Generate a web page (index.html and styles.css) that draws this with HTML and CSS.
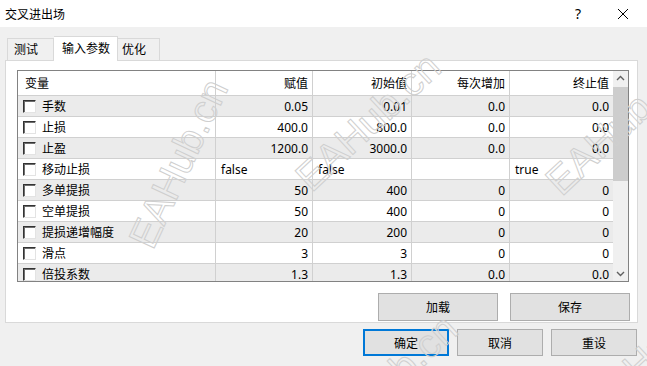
FILE: index.html
```html
<!DOCTYPE html>
<html lang="zh">
<head>
    <meta charset="UTF-8">
    <title>交叉进出场</title>
    <link rel="stylesheet" href="styles.css">
</head>
<body>
    <!-- Barra de título -->
    <div class="titlebar">
        <span class="title">交叉进出场</span>
        <span class="help">?</span>
        <svg class="close" width="12" height="12" viewBox="0 0 12 12"><path d="M1 1L11 11M11 1L1 11" stroke="#000" stroke-width="1"/></svg>
    </div>

    <!-- Pestañas -->
    <div class="tabs">
        <div class="tab t1">测试</div>
        <div class="tab active">输入参数</div>
        <div class="tab t3">优化</div>
    </div>

    <!-- Panel de parámetros -->
    <div class="panel">
        <div class="grid">
            <div class="table">
                <div class="row head">
                    <div class="cell left">变量</div>
                    <div class="cell">赋值</div>
                    <div class="cell">初始值</div>
                    <div class="cell">每次增加</div>
                    <div class="cell">终止值</div>
                </div>
                <div class="row odd">
                    <div class="cell left"><span class="check"></span>手数</div>
                    <div class="cell">0.05</div><div class="cell">0.01</div><div class="cell">0.0</div><div class="cell">0.0</div>
                </div>
                <div class="row">
                    <div class="cell left"><span class="check"></span>止损</div>
                    <div class="cell">400.0</div><div class="cell">800.0</div><div class="cell">0.0</div><div class="cell">0.0</div>
                </div>
                <div class="row odd">
                    <div class="cell left"><span class="check"></span>止盈</div>
                    <div class="cell">1200.0</div><div class="cell">3000.0</div><div class="cell">0.0</div><div class="cell">0.0</div>
                </div>
                <div class="row">
                    <div class="cell left"><span class="check"></span>移动止损</div>
                    <div class="cell left">false</div><div class="cell left">false</div><div class="cell"></div><div class="cell left">true</div>
                </div>
                <div class="row odd">
                    <div class="cell left"><span class="check"></span>多单提损</div>
                    <div class="cell">50</div><div class="cell">400</div><div class="cell">0</div><div class="cell">0</div>
                </div>
                <div class="row">
                    <div class="cell left"><span class="check"></span>空单提损</div>
                    <div class="cell">50</div><div class="cell">400</div><div class="cell">0</div><div class="cell">0</div>
                </div>
                <div class="row odd">
                    <div class="cell left"><span class="check"></span>提损递增幅度</div>
                    <div class="cell">20</div><div class="cell">200</div><div class="cell">0</div><div class="cell">0</div>
                </div>
                <div class="row">
                    <div class="cell left"><span class="check"></span>滑点</div>
                    <div class="cell">3</div><div class="cell">3</div><div class="cell">0</div><div class="cell">0</div>
                </div>
                <div class="row odd">
                    <div class="cell left"><span class="check"></span>倍投系数</div>
                    <div class="cell">1.3</div><div class="cell">1.3</div><div class="cell">0.0</div><div class="cell">0.0</div>
                </div>
            </div>
            <!-- Barra de desplazamiento -->
            <div class="scroll">
                <svg class="arrow" width="15" height="15" viewBox="0 0 15 15"><path d="M4 9L7.5 5.5L11 9" fill="none" stroke="#606060" stroke-width="1.4"/></svg>
                <div class="thumb"></div>
                <div class="spacer"></div>
                <svg class="arrow" width="15" height="15" viewBox="0 0 15 15"><path d="M4 6L7.5 9.5L11 6" fill="none" stroke="#606060" stroke-width="1.4"/></svg>
            </div>
        </div>
        <div class="actions">
            <button class="btn wide">加载</button>
            <button class="btn wide">保存</button>
        </div>
    </div>

    <!-- Botones inferiores -->
    <div class="footer">
        <button class="btn small default">确定</button>
        <button class="btn small">取消</button>
        <button class="btn small">重设</button>
    </div>

    <!-- Marcas de agua -->
    <div class="mark m1">EAHub.cn</div>
    <div class="mark m2">EAHub.cn</div>
    <div class="mark m3">EAHub.cn</div>
    <div class="mark m4">EAHub.cn</div>
    <div class="mark m5">EAHub.cn</div>
</body>
</html>
```

FILE: styles.css
```css
/* Estilos generales */
body {
    margin: 0;
    width: 647px;
    height: 366px;
    overflow: hidden;
    position: relative;
    background-color: #f0f0f0;
    font-family: "Noto Sans", "Noto Sans CJK SC", sans-serif;
    font-size: 12px;
    color: #000;
}

/* Barra de título */
.titlebar {
    height: 27px;
    background-color: #fff;
    display: flex;
    align-items: center;
    padding-left: 5px;
}

.title {
    flex: 1;
}

.help {
    font-size: 14px;
    margin-right: 36px;
}

.close {
    margin-right: 18px;
}

/* Pestañas */
.tabs {
    display: flex;
    align-items: flex-end;
    height: 33px;
    padding-left: 7px;
    position: relative;
    z-index: 1;
}

.tab {
    height: 21px;
    line-height: 21px;
    padding-left: 6px;
    border: 1px solid #d9d9d9;
    border-bottom: none;
    background-color: #f0f0f0;
    box-sizing: content-box;
}

.tab.t1 {
    width: 39px;
}

.tab.t3 {
    width: 37px;
    padding-left: 4px;
    border-left: none;
}

.tab.active {
    width: 55px;
    height: 24px;
    line-height: 23px;
    padding-left: 8px;
    background-color: #fff;
    margin-bottom: -1px;
    border-left: none;
}

/* Panel */
.panel {
    margin-left: 5px;
    width: 633px;
    height: 263px;
    border: 1px solid #d9d9d9;
    background-color: #fff;
    padding-top: 9px;
    box-sizing: border-box;
}

.grid {
    display: flex;
    margin-left: 11px;
    width: 612px;
    height: 212px;
    border: 1px solid #828282;
    box-sizing: border-box;
}

.table {
    width: 595px;
    overflow: hidden;
}

.row {
    display: grid;
    grid-template-columns: 198px 97px 99px 98px 103px;
    height: 21px;
    border-bottom: 1px solid #d0d0d0;
    box-sizing: border-box;
}

.row.head {
    height: 25px;
}

.row.odd {
    background-color: #ebebeb;
}

.cell {
    border-right: 1px solid #d0d0d0;
    display: flex;
    align-items: center;
    justify-content: flex-end;
    padding: 0 4px;
    white-space: nowrap;
    overflow: hidden;
}

.cell:last-child {
    border-right: none;
}

.cell.left {
    justify-content: flex-start;
    padding-left: 5px;
}

.head .cell.left {
    padding-left: 7px;
}

.check {
    width: 11px;
    height: 11px;
    border-top: 1px solid #333;
    border-left: 1px solid #333;
    border-right: 1px solid #e3e3e3;
    border-bottom: 1px solid #e3e3e3;
    box-shadow: inset 1px 1px 0 #6e6e6e;
    background-color: #fff;
    margin-right: 6px;
}

/* Barra de desplazamiento */
.scroll {
    width: 15px;
    background-color: #f0f0f0;
    display: flex;
    flex-direction: column;
}

.thumb {
    margin-top: 1px;
    height: 94px;
    background-color: #cdcdcd;
}

.spacer {
    flex: 1;
}

/* Botones */
.actions {
    display: flex;
    justify-content: flex-end;
    gap: 12px;
    margin-top: 11px;
    padding-right: 7px;
}

.btn {
    font-family: "Noto Sans", "Noto Sans CJK SC", sans-serif;
    font-size: 12px;
    background-color: #e1e1e1;
    border: 1px solid #adadad;
    padding: 0;
    color: #000;
}

.btn.wide {
    width: 120px;
    height: 28px;
}

.footer {
    display: flex;
    gap: 8px;
    margin-top: 6px;
    padding-left: 363px;
}

.btn.small {
    width: 86px;
    height: 27px;
}

.btn.default {
    border: 2px solid #0078d7;
}

/* Marcas de agua */
.mark {
    position: absolute;
    font-family: "Liberation Sans", sans-serif;
    font-size: 40px;
    line-height: 40px;
    color: transparent;
    -webkit-text-stroke: 1px #cfcfcf;
    white-space: nowrap;
    transform-origin: 0 50%;
    pointer-events: none;
}

.m1 {
    left: 140px;
    top: 225px;
    transform: rotate(-65deg);
}

.m2 {
    left: 302px;
    top: 163px;
    transform: rotate(-43deg);
}

.m3 {
    left: 552px;
    top: 167px;
    transform: rotate(-43deg);
}

.m4 {
    left: 319px;
    top: 425px;
    transform: rotate(-43deg);
}

.m5 {
    left: 590px;
    top: 390px;
    transform: rotate(-43deg);
}
```
